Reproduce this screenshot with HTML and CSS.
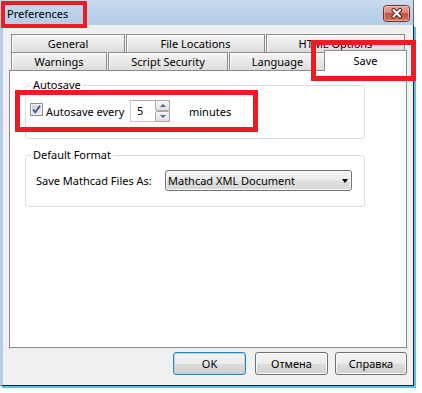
FILE: index.html
```html
<!DOCTYPE html>
<html lang="en">
<head>
  <meta charset="UTF-8" />
  <meta name="viewport" content="width=device-width, initial-scale=1" />
  <title>Preferences</title>
  <link rel="stylesheet" href="styles.css">
</head>
<body>

  <div class="window">
    <!-- title bar -->
    <div class="titlebar">
      <span class="title">Preferences</span>
      <span class="close-btn">
        <svg width="27" height="17" viewBox="0 0 27 17">
          <defs>
            <linearGradient id="closeGrad" x1="0" y1="0" x2="0" y2="1">
              <stop offset="0" stop-color="#eab0a3" />
              <stop offset="0.45" stop-color="#d98676" />
              <stop offset="0.5" stop-color="#c6503e" />
              <stop offset="1" stop-color="#d8785d" />
            </linearGradient>
          </defs>
          <rect x="0.5" y="0.5" width="26" height="16" rx="3" fill="url(#closeGrad)" stroke="#6e302a" />
          <rect x="1.5" y="1.5" width="24" height="14" rx="2" fill="none" stroke="#f3c9bf" stroke-opacity="0.6" />
          <path d="M10.5 5 L17 11.5 M17 5 L10.5 11.5" stroke="#4a2420" stroke-width="4.2" stroke-linecap="round" />
          <path d="M10.5 5 L17 11.5 M17 5 L10.5 11.5" stroke="#ffffff" stroke-width="2.2" stroke-linecap="round" />
        </svg>
      </span>
    </div>

    <div class="client">
      <!-- tabs, two rows -->
      <div class="tabs">
        <div class="tab-row">
          <div class="tab w-general">General</div>
          <div class="tab w-files">File Locations</div>
          <div class="tab w-html">HTML Options</div>
        </div>
        <div class="tab-row">
          <div class="tab w-warn">Warnings</div>
          <div class="tab w-script">Script Security</div>
          <div class="tab w-lang">Language</div>
          <div class="tab tab-selected w-save">Save</div>
        </div>
      </div>

      <div class="pane">
        <fieldset class="group">
          <legend>Autosave</legend>
          <div class="group-row">
            <span class="checkbox">
              <svg width="11" height="11" viewBox="0 0 11 11">
                <path d="M2 5.5 L4.3 8.3 L9 1.8" fill="none" stroke="#42588f" stroke-width="1.9" />
              </svg>
            </span>
            <span class="check-label">Autosave every</span>
            <span class="spin">
              <span class="spin-edit">5</span>
              <span class="spin-btns">
                <span class="spin-btn spin-up"></span>
                <span class="spin-btn spin-down"></span>
              </span>
            </span>
            <span class="spin-unit">minutes</span>
          </div>
        </fieldset>

        <fieldset class="group">
          <legend>Default Format</legend>
          <div class="group-row format-row">
            <span class="field-label">Save Mathcad Files As:</span>
            <span class="combo">
              <span>Mathcad XML Document</span>
              <span class="combo-arrow"></span>
            </span>
          </div>
        </fieldset>
      </div>

      <div class="buttons">
        <button class="btn btn-default">OK</button>
        <button class="btn btn-cancel">Отмена</button>
        <button class="btn btn-help">Справка</button>
      </div>
    </div>
  </div>

  <!-- red annotation frames -->
  <div class="mark mark-title"></div>
  <div class="mark mark-save"></div>
  <div class="mark mark-auto"></div>

</body>
</html>
```

FILE: styles.css
```css
body {
  margin: 0; width: 422px; height: 393px; overflow: hidden;
  position: relative; background: #fff; color: #000;
  font-family: "Noto Sans", "Liberation Sans", sans-serif; font-size: 11px;
}

.window { width: 414px; }

.titlebar {
  height: 25px; box-sizing: border-box;
  display: flex; justify-content: space-between; align-items: flex-start;
  background: linear-gradient(#cbdcef, #bbd2ea 50%, #b5cde8);
  border-right: 1px solid #5e6f82;
}
.title { margin: 6px 0 0 7px; line-height: 16px; }
.close-btn { margin: 5px 3px 0 0; height: 17px; }
.close-btn svg { display: block; }

.client {
  width: 414px; height: 361px; box-sizing: border-box;
  background: #f0f0f0; padding: 9px 6px 0 6px;
  border-left: 3px solid #b3cde8; border-right: 1px solid #222; border-bottom: 1px solid #222;
  box-shadow: 2px 2px 0 #4fc1ea;
}

/* tabs */
.tabs { margin-left: 2px; height: 36px; }
.tab-row { display: flex; gap: 1px; height: 18px; align-items: flex-start; }
.tab {
  box-sizing: border-box; height: 18px; line-height: 14px;
  display: flex; align-items: center; justify-content: center;
  border: 1px solid #898c95; border-bottom: none;
  background: linear-gradient(#f4f4f4, #e9e9e9 50%, #dcdcdc);
  box-shadow: inset 1px 1px 0 #fbfbfb;
}
.w-general { width: 114px; }
.w-files { width: 139px; }
.w-html { width: 139px; }
.w-warn { width: 96px; }
.w-script { width: 120px; }
.w-lang { width: 97px; }
.w-save { width: 83px; margin-left: -3px; }
.tab-selected {
  height: 21px; margin-top: -2px; background: #fff; box-shadow: none;
  position: relative; z-index: 1;
}

.pane {
  box-sizing: border-box; height: 278px; padding-top: 7px;
  border: 1px solid #898c95; background: #fff;
}

/* group boxes */
.group {
  margin: 0 0 0 15px; padding: 0; width: 340px; box-sizing: border-box;
  min-inline-size: 0; border: 1px solid #d5dfe5; border-radius: 3px;
}
.group + .group { margin-top: 9px; }
.group legend { margin-left: 5px; padding: 0 2px; line-height: 14px; }

.group-row {
  display: flex; align-items: center; height: 22px;
  margin: 8px 0 16px; padding-left: 4px;
}
.format-row { height: 21px; padding-left: 10px; margin-bottom: 15px; }

.checkbox {
  width: 13px; height: 13px; box-sizing: border-box; margin: 0 3px 3px 0;
  display: flex; align-items: center; justify-content: center;
  border: 1px solid #8e8f8f; background: linear-gradient(135deg, #cdd2da, #eef0f3);
  box-shadow: inset 0 0 0 1px #f4f4f4;
}
.checkbox svg { display: block; }
.check-label { width: 84px; }

.spin {
  display: flex; width: 40px; height: 22px; box-sizing: border-box;
  border: 1px solid #c6cad1; border-top-color: #abadb3;
}
.spin-edit { flex: 1; padding-left: 6px; line-height: 20px; }
.spin-btns { width: 15px; margin: -1px -1px -1px 0; display: flex; flex-direction: column; }
.spin-btn {
  flex: 1; box-sizing: border-box; border: 1px solid #a9a9a9; border-radius: 2px;
  background: linear-gradient(#f6f6f6, #e0e0e0);
  display: flex; align-items: center; justify-content: center;
}
.spin-up::after {
  content: ""; border-left: 3px solid transparent; border-right: 3px solid transparent;
  border-bottom: 3px solid #4f6384;
}
.spin-down::after {
  content: ""; border-left: 3px solid transparent; border-right: 3px solid transparent;
  border-top: 3px solid #4f6384;
}
.spin-unit { margin-left: 19px; }

.field-label { width: 129px; }
.combo {
  width: 187px; height: 21px; box-sizing: border-box; padding: 0 3px 0 2px;
  display: flex; align-items: center; justify-content: space-between;
  border: 1px solid #707070; border-radius: 3px;
  background: linear-gradient(#f4f4f4, #ebebeb 45%, #dfdfdf 55%, #d6d6d6);
  box-shadow: inset 0 0 0 1px #fafafa;
}
.combo-arrow {
  width: 0; height: 0;
  border-left: 3.5px solid transparent; border-right: 3.5px solid transparent;
  border-top: 4px solid #000;
}

/* dialog buttons */
.buttons { display: flex; justify-content: flex-end; margin-top: 4px; }
.btn {
  width: 73px; height: 23px; padding: 0; font: inherit; color: #000;
  border: 1px solid #707070; border-radius: 3px;
  background: linear-gradient(#f2f2f2, #ebebeb 50%, #dddddd 50%, #cfcfcf);
  box-shadow: inset 0 0 0 1px #fcfcfc;
}
.btn-default { margin-right: 9px; border-color: #3c7fb1; box-shadow: inset 0 0 0 1px #9edcf7; }
.btn-cancel { margin-right: 7px; }
.btn-help { width: 72px; }

/* annotation frames */
.mark { position: absolute; box-sizing: border-box; border: 5px solid #ed1c24; z-index: 10; }
.mark-title { left: 1px; top: 1px; width: 86px; height: 27px; border-width: 4px; }
.mark-save { left: 311px; top: 40px; width: 105px; height: 41px; }
.mark-auto { left: 15px; top: 90px; width: 243px; height: 42px; }
```
